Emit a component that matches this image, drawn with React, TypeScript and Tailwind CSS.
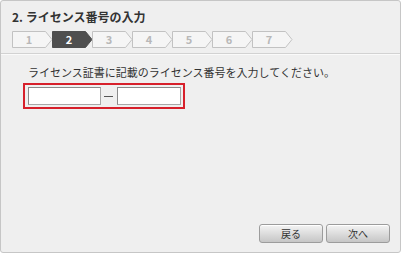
import React from 'react';

const steps = [1, 2, 3, 4, 5, 6, 7];
const current = 2;

function Step({ n, active }: { n: number; active: boolean }) {
  return (
    <div className="relative w-[40px] h-[17px] flex items-center">
      <svg className="absolute left-0 top-0" width="41" height="17" viewBox="0 0 41 17">
        <polygon
          points="0.5,0.5 33.5,0.5 40,8.5 33.5,16.5 0.5,16.5"
          fill={active ? '#4f4f4f' : '#f5f5f5'}
          stroke={active ? '#4f4f4f' : '#c2c2c2'}
        />
      </svg>
      <span
        className={`relative w-[34px] text-center text-[11px] font-bold leading-none ${
          active ? 'text-white' : 'text-[#b8b8b8]'
        }`}
      >
        {n}
      </span>
    </div>
  );
}

function Button({ label }: { label: string }) {
  return (
    <button className="w-[64px] h-[19px] rounded-[3px] border border-[#9c9c9c] bg-gradient-to-b from-[#f4f4f4] to-[#c6c6c6] text-[10px] leading-none text-[#333] shadow-[inset_0_1px_0_#ffffff]">
      {label}
    </button>
  );
}

export default function App() {
  return (
    <div
      className="w-[401px] h-[253px] bg-[#efefef] border border-[#c6c6c6] rounded-[3px] flex flex-col text-[#333]"
      style={{ fontFamily: '"Noto Sans CJK JP", "Liberation Sans", sans-serif' }}
    >
      {/* Header */}
      <div className="h-[53px] px-[11px] pt-[8px] border-b border-[#d2d2d2] shadow-[0_1px_0_#fafafa]">
        <h1 className="text-[12px] font-bold leading-[16px] text-[#333]">2. ライセンス番号の入力</h1>
        <div className="flex mt-[6px]">
          {steps.map((n) => (
            <Step key={n} n={n} active={n === current} />
          ))}
        </div>
      </div>

      {/* Body */}
      <div className="px-[27px] pt-[11px]">
        <p className="text-[11px] leading-[14px]">ライセンス証書に記載のライセンス番号を入力してください。</p>
        <div className="ml-[-5px] mt-[4px] w-[162px] h-[26px] border-2 border-[#d7202b] flex items-center pl-[3px]">
          <input className="w-[73px] shrink-0 h-[18px] bg-white border border-[#a8a8a8] border-t-[#8a8a8a] border-l-[#8a8a8a] outline-none" />
          <span className="w-[9px] shrink-0 h-[1px] bg-[#555] ml-[3px] mr-[4px]" />
          <input className="w-[64px] shrink-0 h-[18px] bg-white border border-[#a8a8a8] border-t-[#8a8a8a] border-l-[#8a8a8a] outline-none" />
        </div>
      </div>

      {/* Footer */}
      <div className="mt-auto flex justify-end gap-[3px] pr-[10px] pb-[9px]">
        <Button label="戻る" />
        <Button label="次へ" />
      </div>
    </div>
  );
}
